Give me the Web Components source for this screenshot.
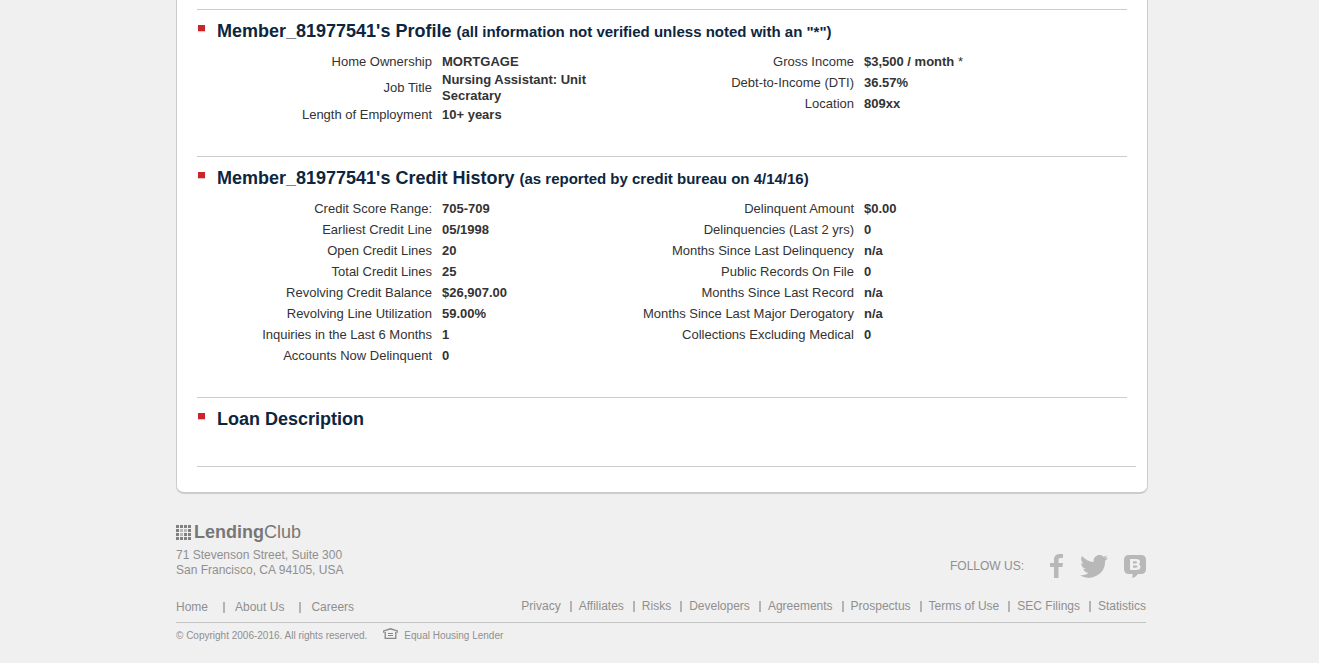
<!DOCTYPE html>
<html lang="en">
<head>
<meta charset="utf-8">
<title>Loan Details - LendingClub</title>
<style>
body { margin: 0; padding-left: 5px; background: #f0f0f0; color: #333; font: 13px/16px "Liberation Sans", Arial, sans-serif; }
</style>
</head>
<body>
<loan-card>
  <loan-section>
    <span slot="title">Member_81977541's Profile</span>
    <span slot="note">(all information not verified unless noted with an "*")</span>
    <fact-table>
      <b data-label="Home Ownership">MORTGAGE</b>
      <b data-label="Job Title">Nursing Assistant: Unit Secratary</b>
      <b data-label="Length of Employment">10+ years</b>
    </fact-table>
    <fact-table>
      <span data-label="Gross Income"><b>$3,500 / month</b> *</span>
      <b data-label="Debt-to-Income (DTI)">36.57%</b>
      <b data-label="Location">809xx</b>
    </fact-table>
  </loan-section>
  <loan-section>
    <span slot="title">Member_81977541's Credit History</span>
    <span slot="note">(as reported by credit bureau on 4/14/16)</span>
    <fact-table>
      <b data-label="Credit Score Range:">705-709</b>
      <b data-label="Earliest Credit Line">05/1998</b>
      <b data-label="Open Credit Lines">20</b>
      <b data-label="Total Credit Lines">25</b>
      <b data-label="Revolving Credit Balance">$26,907.00</b>
      <b data-label="Revolving Line Utilization">59.00%</b>
      <b data-label="Inquiries in the Last 6 Months">1</b>
      <b data-label="Accounts Now Delinquent">0</b>
    </fact-table>
    <fact-table>
      <b data-label="Delinquent Amount">$0.00</b>
      <b data-label="Delinquencies (Last 2 yrs)">0</b>
      <b data-label="Months Since Last Delinquency">n/a</b>
      <b data-label="Public Records On File">0</b>
      <b data-label="Months Since Last Record">n/a</b>
      <b data-label="Months Since Last Major Derogatory">n/a</b>
      <b data-label="Collections Excluding Medical">0</b>
    </fact-table>
  </loan-section>
  <loan-section>
    <span slot="title">Loan Description</span>
  </loan-section>
</loan-card>
<site-footer></site-footer>

<script>
class BaseElement extends HTMLElement {
  render(html) {
    if (!this.shadowRoot) this.attachShadow({ mode: "open" });
    this.shadowRoot.innerHTML = html;
  }
}

class LoanCard extends BaseElement {
  connectedCallback() {
    this.render(`
      <style>
        :host { display: block; box-sizing: border-box; max-width: 972px; margin: 0 auto; padding: 9px 11px 25px 20px;
          background: #fff; border: solid #ccc; border-width: 0 1px 2px; border-radius: 0 0 8px 8px; }
        .sections { padding-right: 9px; }
        hr { margin: 0; border: 0; border-top: 1px solid #ccc; }
      </style>
      <div class="sections"><slot></slot></div>
      <hr>`);
  }
}

class LoanSection extends BaseElement {
  connectedCallback() {
    this.render(`
      <style>
        :host { display: block; border-top: 1px solid #ccc; }
        header { display: flex; padding: 11px 0 9px 1px; color: #0d2640; }
        .bullet { flex: none; width: 7px; height: 6px; margin: 4px 12px 0 0; background: #c9252c; box-shadow: 0 1px 1px #e5c0c0; }
        h2 { margin: 0; font-size: 18px; line-height: 21px; }
        small { font-size: 15px; line-height: 16px; }
        .columns { display: grid; grid-template-columns: repeat(2, minmax(0, 422px)); align-items: start; padding-bottom: 31px; }
        :host(:last-of-type) .columns { padding-bottom: 27px; }
      </style>
      <header><span class="bullet"></span><h2><slot name="title"></slot> <small><slot name="note"></slot></small></h2></header>
      <div class="columns"><slot></slot></div>`);
  }
}

class FactTable extends BaseElement {
  connectedCallback() {
    const rows = [...this.children].map((item, i) => {
      item.slot = "value" + i;
      return `<tr><th scope="row">${item.dataset.label}</th><td><slot name="value${i}"></slot></td></tr>`;
    }).join("");
    this.render(`
      <style>
        :host { display: block; }
        table { width: 100%; border-collapse: collapse; table-layout: fixed; }
        th { width: 235px; padding: 0 10px 0 0; height: 21px; text-align: right; font-weight: normal; }
        td { padding: 0; }
      </style>
      <table>${rows}</table>`);
  }
}

class FooterLinks extends BaseElement {
  connectedCallback() {
    const links = this.getAttribute("items").split("|").map(t => `<li><a href="#">${t}</a></li>`).join("");
    this.render(`
      <style>
        :host { display: block; }
        ul { display: flex; flex-wrap: wrap; margin: 0; padding: 0; list-style: none; }
        li { display: flex; align-items: center; }
        li + li::before { content: ""; width: 2px; height: 11px; margin: 0 var(--after, 7px) 0 var(--before, 9px); background: #b4b4b4; }
        a { color: inherit; text-decoration: none; }
      </style>
      <ul>${links}</ul>`);
  }
}

class SocialIcon extends BaseElement {
  connectedCallback() {
    const shapes = {
      Facebook: [14, 24, '<path d="M4 24V13H0V9h4V6c0-4 2-6 6-6h3v4h-2C9 4 8.500 4.500 8.500 6v3H13l-.5 4h-4v11z"/>'],
      Twitter: [28, 23, '<path d="M28 2.700a11.500 11.500 0 0 1-3.300.9A5.800 5.800 0 0 0 27.200.4a11.500 11.500 0 0 1-3.600 1.400A5.750 5.750 0 0 0 13.800 7 16.300 16.300 0 0 1 2 1a5.750 5.750 0 0 0 1.700 7.700A5.700 5.700 0 0 1 1.200 8a5.750 5.750 0 0 0 4.600 5.700 5.700 5.700 0 0 1-2.600.1 5.750 5.750 0 0 0 5.400 4A11.500 11.500 0 0 1 0 20.200 16.300 16.300 0 0 0 25.100 5.700 11.700 11.700 0 0 0 28 2.700z"/>'],
      Blog: [22, 24, '<path fill-rule="evenodd" d="M5 1h12q5 0 5 5v9q0 5-5 5h-3q-2 3-6 4 1-2 .5-4H5q-5 0-5-5V6q0-5 5-5zM6 5v11h6q4.500 0 4.500-3.300 0-1.900-1.800-2.500 1.400-.7 1.400-2.200Q16.100 5 12 5zM9 7.200h2.600q1.500 0 1.500 1.100t-1.500 1.200H9zM9 11.500h2.800q1.700 0 1.700 1.100t-1.700 1.200H9z"/>']
    };
    const name = this.getAttribute("name");
    const [w, h, shape] = shapes[name];
    this.render(`
      <style>:host { display: block; } a, svg { display: block; } svg { fill: #b8b8b8; }</style>
      <a href="#" aria-label="${name}"><svg width="${w}" height="${h}" viewBox="0 0 ${w} ${h}">${shape}</svg></a>`);
  }
}

class BrandLogo extends BaseElement {
  connectedCallback() {
    const small = ["1,1", "2,1", "1,2"];
    let dots = "";
    for (let y = 0; y < 4; y++) for (let x = 0; x < 4; x++) {
      const faded = small.includes(x + "," + y);
      dots += `<rect x="${x * 4}" y="${y * 4}" width="3" height="3" opacity="${faded ? 0.5 : 1}"/>`;
    }
    this.render(`
      <style>
        :host { display: block; }
        a { display: flex; align-items: center; gap: 3px; color: #777; font-size: 18px; line-height: 20px; text-decoration: none; }
        svg { display: block; fill: #808080; }
      </style>
      <a href="#"><svg width="15" height="15" viewBox="0 0 15 15" aria-hidden="true">${dots}</svg><span><b>Lending</b>Club</span></a>`);
  }
}

class SiteFooter extends BaseElement {
  connectedCallback() {
    this.render(`
      <style>
        :host { display: block; box-sizing: border-box; max-width: 972px; margin: 0 auto; padding: 28px 2px 20px 0; color: #8f8f8f; font-size: 12px; line-height: 15px; }
        .row { display: flex; justify-content: space-between; }
        address { margin-top: 6px; font-style: normal; }
        .social { display: flex; align-items: center; align-self: flex-end; }
        .icons { display: flex; align-items: center; gap: 16px; margin-left: 26px; }
        .links { padding: 21px 0 7px; border-bottom: 1px solid #c4c4c4; }
        .main { --before: 15px; --after: 10px; padding-top: 1px; }
        .legal { display: flex; align-items: center; gap: 16px; padding-top: 5px; font-size: 10px; }
        .legal svg { display: block; margin-bottom: 4px; }
        .lender { display: flex; align-items: center; gap: 6px; }
      </style>
      <div class="row">
        <div>
          <brand-logo></brand-logo>
          <address>71 Stevenson Street, Suite 300<br>San Francisco, CA 94105, USA</address>
        </div>
        <div class="social">
          <span>FOLLOW US:</span>
          <div class="icons">
            <social-icon name="Facebook"></social-icon>
            <social-icon name="Twitter"></social-icon>
            <social-icon name="Blog"></social-icon>
          </div>
        </div>
      </div>
      <nav class="row links">
        <footer-links class="main" items="Home|About Us|Careers"></footer-links>
        <footer-links items="Privacy|Affiliates|Risks|Developers|Agreements|Prospectus|Terms of Use|SEC Filings|Statistics"></footer-links>
      </nav>
      <div class="legal">
        <span>© Copyright 2006-2016. All rights reserved.</span>
        <span class="lender">
          <svg width="15" height="11" viewBox="0 0 15 11" fill="none" stroke="#888" aria-hidden="true"><path stroke-width="1.300" d="M.7 4.800V3L7.500.8 14.300 3v1.800M2.200 4v6.300h10.600V4"/><path d="M5 5.500h5M5 7.500h5"/></svg>
          <span>Equal Housing Lender</span>
        </span>
      </div>`);
  }
}

customElements.define("loan-card", LoanCard);
customElements.define("loan-section", LoanSection);
customElements.define("fact-table", FactTable);
customElements.define("footer-links", FooterLinks);
customElements.define("social-icon", SocialIcon);
customElements.define("brand-logo", BrandLogo);
customElements.define("site-footer", SiteFooter);
</script>
</body>
</html>
